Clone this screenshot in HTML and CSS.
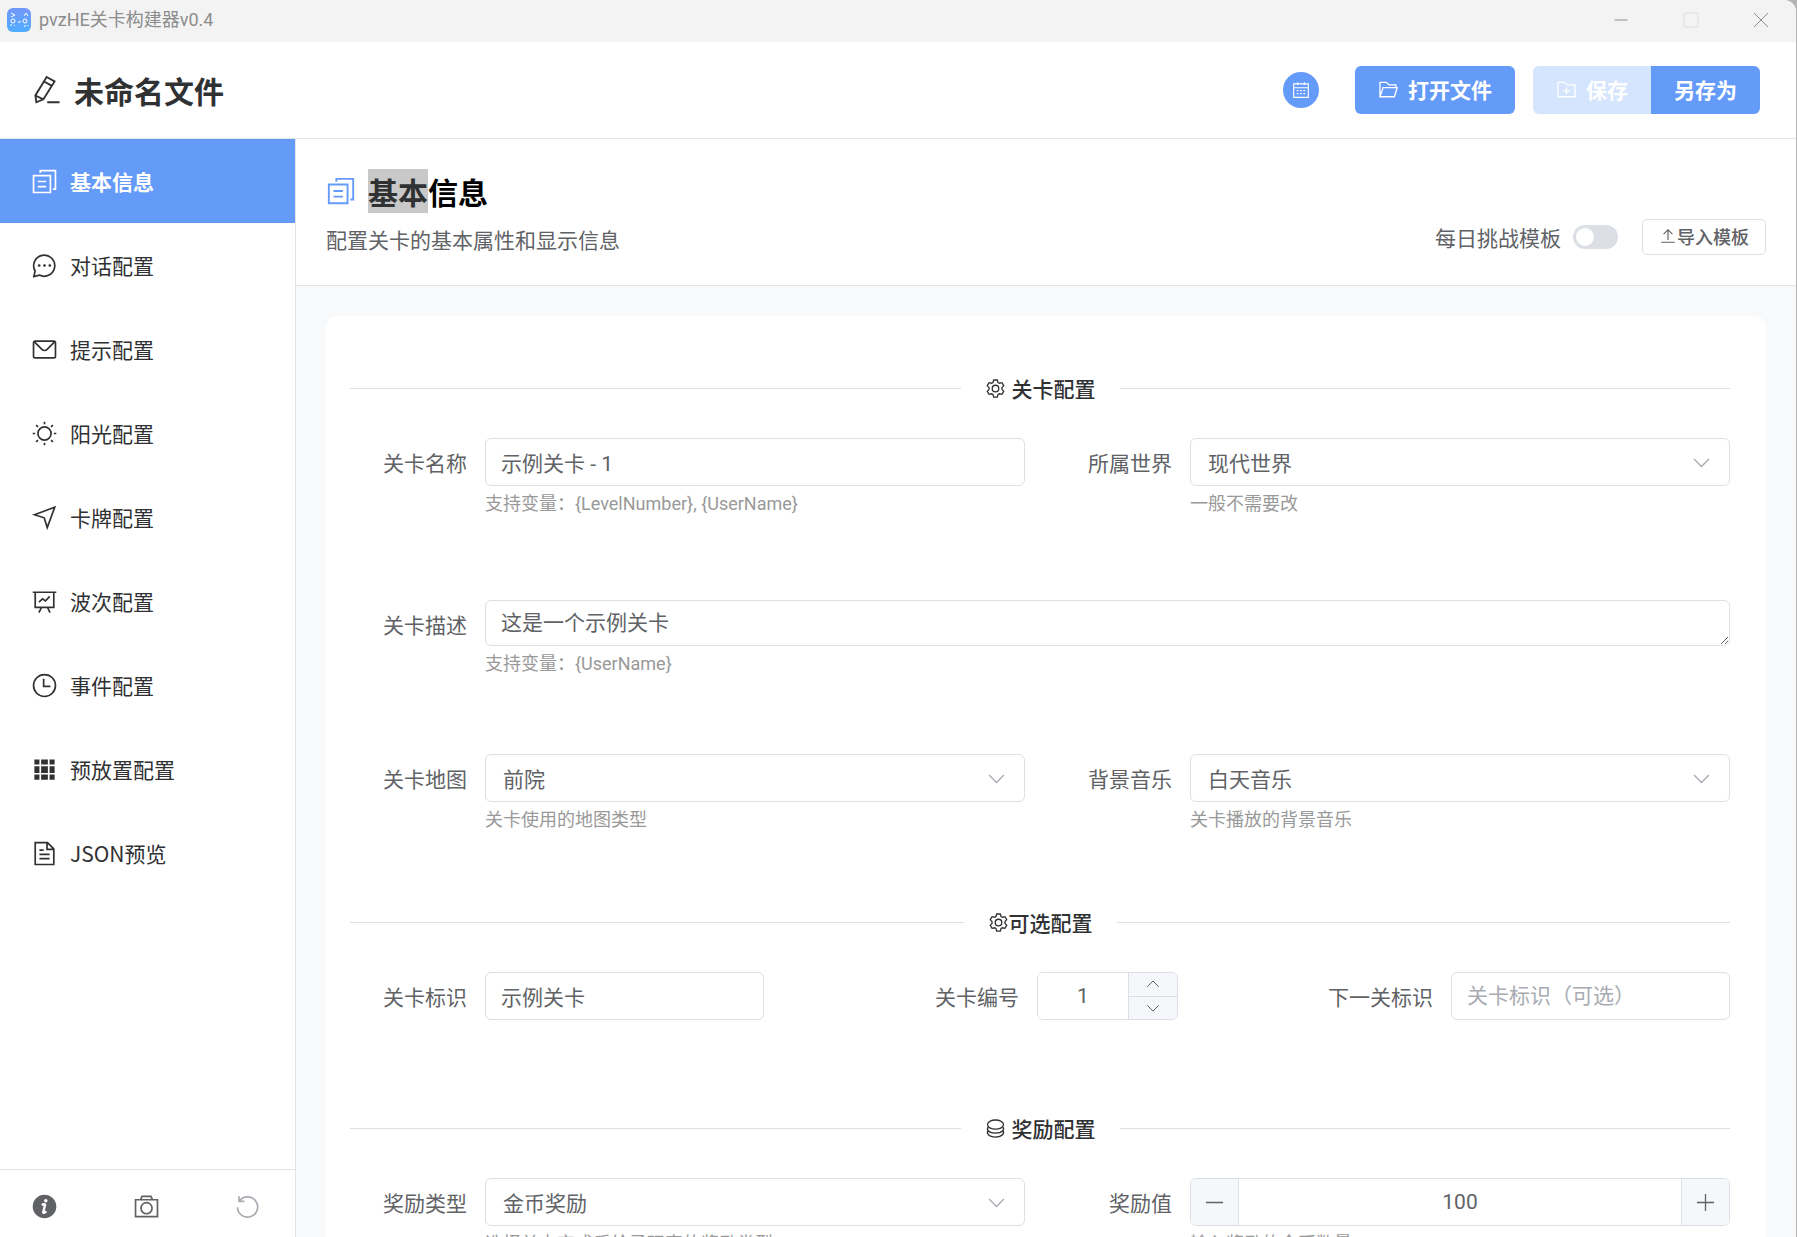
FILE: index.html
```html
<!DOCTYPE html>
<html lang="zh-CN">
<head>
    <meta charset="UTF-8">
    <meta name="viewport" content="width=device-width, initial-scale=1.0">
    <title>pvzHE关卡构建器v0.4</title>
    <link rel="stylesheet" href="styles.css">
</head>
<body>

<!-- Icon sprite -->
<svg class="sprite" aria-hidden="true">
    <symbol id="i-copy" viewBox="0 0 1024 1024"><path d="M96 288h640v640H96zM352 192V96h576v704h-96M256 512h320M256 704h320"/></symbol>
    <symbol id="i-pen" viewBox="0 0 1024 1024"><path d="M500 70 770 220 390 830 150 930 115 700zM410 220 680 370M115 700 390 830M520 930h420"/></symbol>
    <symbol id="i-chat" viewBox="0 0 1024 1024"><path d="M110 930l46-210A400 400 0 1 1 320 875z"/><g class="solid"><circle cx="310" cy="512" r="52"/><circle cx="512" cy="512" r="52"/><circle cx="714" cy="512" r="52"/></g></symbol>
    <symbol id="i-message" viewBox="0 0 1024 1024"><rect x="96" y="192" width="832" height="640" rx="64"/><path d="M110 205l304 304a140 140 0 0 0 196 0l304-304"/></symbol>
    <symbol id="i-sun" viewBox="0 0 1024 1024"><circle cx="512" cy="512" r="250"/><path d="M512 64v96M512 864v96M64 512h96M864 512h96M195 195l68 68M761 761l68 68M195 829l68-68M761 263l68-68"/></symbol>
    <symbol id="i-position" viewBox="0 0 1024 1024"><path d="M130 408 900 124 616 894 500 524z"/></symbol>
    <symbol id="i-board" viewBox="0 0 1024 1024"><path d="M64 160h896M160 160v576h704V160M400 736 300 930M624 736l100 194M300 540l140-130 110 80 160-170"/></symbol>
    <symbol id="i-clock" viewBox="0 0 1024 1024"><circle cx="512" cy="512" r="416"/><path d="M480 256v288h256"/></symbol>
    <symbol id="i-grid" viewBox="0 0 1024 1024"><path class="solid" d="M128 128h192v192H128zM384 128h256v192H384zM704 128h192v192H704zM128 384h192v256H128zM384 384h256v256H384zM704 384h192v256H704zM128 704h192v192H128zM384 704h256v192H384zM704 704h192v192H704z"/></symbol>
    <symbol id="i-document" viewBox="0 0 1024 1024"><path d="M160 96h464l240 240v592H160zM608 110v242h242M320 384h160M320 544h384M320 704h384"/></symbol>
    <symbol id="i-info" viewBox="0 0 1024 1024"><circle class="solid" cx="512" cy="512" r="448"/><circle class="cut" cx="562" cy="292" r="66"/><path class="cut-line" d="M410 460c60-40 130-50 125 0l-70 250c-15 70 60 40 120-10"/></symbol>
    <symbol id="i-camera" viewBox="0 0 1024 1024"><path d="M96 256h832v640H96zM290 250l50-122h344l50 122"/><circle cx="512" cy="576" r="210"/></symbol>
    <symbol id="i-refresh" viewBox="0 0 1024 1024"><path d="M190 120v200h200M200 310A384 384 0 1 1 130 540"/></symbol>
    <symbol id="i-calendar" viewBox="0 0 1024 1024"><path d="M96 160h832v768H96zM96 384h832M320 64v160M704 64v160M270 544h100M460 544h100M650 544h100M270 720h100M460 720h100M650 720h100"/></symbol>
    <symbol id="i-folder-open" viewBox="0 0 1024 1024"><path d="M96 864V160h314l128 128h330v120M96 864l150-448h690L800 864z"/></symbol>
    <symbol id="i-folder-add" viewBox="0 0 1024 1024"><path d="M96 160h320l128 128h384v576H96zM512 416v320M352 576h320"/></symbol>
    <symbol id="i-upload" viewBox="0 0 1024 1024"><path d="M128 864h768M512 740V170M260 410l252-252 252 252"/></symbol>
    <symbol id="i-setting" viewBox="0 0 1024 1024"><path d="M424 96h176l36 122 66 38 124-30 88 152-88 92v84l88 92-88 152-124-30-66 38-36 122H424l-36-122-66-38-124 30-88-152 88-92v-84l-88-92 88-152 124 30 66-38z"/><circle cx="512" cy="512" r="160"/></symbol>
    <symbol id="i-coin" viewBox="0 0 1024 1024"><ellipse cx="512" cy="320" rx="390" ry="224"/><path d="M150 440c-90 130 20 296 362 296s452-166 362-296M150 610c-90 130 20 318 362 318s452-188 362-318"/></symbol>
    <symbol id="i-down" viewBox="0 0 1024 1024"><path d="M150 340l362 370 362-370"/></symbol>
    <symbol id="i-up" viewBox="0 0 1024 1024"><path d="M150 690l362-370 362 370"/></symbol>
    <symbol id="i-minus" viewBox="0 0 1024 1024"><path d="M96 512h832"/></symbol>
    <symbol id="i-plus" viewBox="0 0 1024 1024"><path d="M96 512h832M512 96v832"/></symbol>
    <symbol id="i-close" viewBox="0 0 1024 1024"><path d="M64 64l896 896M960 64 64 960"/></symbol>
    <symbol id="i-square" viewBox="0 0 1024 1024"><rect x="64" y="64" width="896" height="896" rx="60"/></symbol>
</svg>

<div class="window">
    <div class="titlebar">
        <svg class="app-logo" viewBox="0 0 24 24">
            <defs>
                <linearGradient id="logoFill" x1="0" y1="0" x2="0" y2="1">
                    <stop offset="0" stop-color="#7397fb"/>
                    <stop offset="1" stop-color="#4fadff"/>
                </linearGradient>
            </defs>
            <rect width="24" height="24" rx="6" fill="url(#logoFill)"/>
            <path d="M4 5l4 2-4 2M19 5l-2 3M19 5l2 3M11 14h3M4 18v-2M8 18l-1-1M17 18h2M21 18v-1" fill="none" stroke="#fff"/>
            <circle cx="6" cy="13" r="2" fill="none" stroke="#fff"/>
            <circle cx="18" cy="13" r="2" fill="none" stroke="#fff"/>
        </svg>
        <span class="app-name">pvzHE关卡构建器v0.4</span>
        <div class="window-controls">
            <button type="button" aria-label="最小化"><svg class="icon"><use href="#i-minus"/></svg></button>
            <button type="button" aria-label="最大化" disabled><svg class="icon"><use href="#i-square"/></svg></button>
            <button type="button" aria-label="关闭"><svg class="icon"><use href="#i-close"/></svg></button>
        </div>
    </div>

    <header class="header">
        <svg class="icon icon-lg"><use href="#i-pen"/></svg>
        <h1>未命名文件</h1>
        <div class="header-actions">
            <button type="button" class="btn-round" aria-label="日历"><svg class="icon"><use href="#i-calendar"/></svg></button>
            <button type="button" class="btn"><svg class="icon"><use href="#i-folder-open"/></svg>打开文件</button>
            <div class="btn-group">
                <button type="button" class="btn" disabled><svg class="icon"><use href="#i-folder-add"/></svg>保存</button>
                <button type="button" class="btn">另存为</button>
            </div>
        </div>
    </header>

    <div class="body">
        <aside class="sidebar">
            <nav class="menu">
                <a href="#basic" class="active"><svg class="icon"><use href="#i-copy"/></svg>基本信息</a>
                <a href="#dialog"><svg class="icon"><use href="#i-chat"/></svg>对话配置</a>
                <a href="#tips"><svg class="icon"><use href="#i-message"/></svg>提示配置</a>
                <a href="#sun"><svg class="icon"><use href="#i-sun"/></svg>阳光配置</a>
                <a href="#cards"><svg class="icon"><use href="#i-position"/></svg>卡牌配置</a>
                <a href="#waves"><svg class="icon"><use href="#i-board"/></svg>波次配置</a>
                <a href="#events"><svg class="icon"><use href="#i-clock"/></svg>事件配置</a>
                <a href="#preset"><svg class="icon"><use href="#i-grid"/></svg>预放置配置</a>
                <a href="#json"><svg class="icon"><use href="#i-document"/></svg>JSON预览</a>
            </nav>
            <div class="sidebar-footer">
                <button type="button" aria-label="关于"><svg class="icon"><use href="#i-info"/></svg></button>
                <button type="button" aria-label="截图"><svg class="icon"><use href="#i-camera"/></svg></button>
                <button type="button" aria-label="撤销" disabled><svg class="icon"><use href="#i-refresh"/></svg></button>
            </div>
        </aside>

        <main class="main">
            <div class="page-header">
                <div>
                    <h2><svg class="icon icon-lg"><use href="#i-copy"/></svg><span><span class="selected">基本</span>信息</span></h2>
                    <p>配置关卡的基本属性和显示信息</p>
                </div>
                <div class="page-actions">
                    <label for="daily">每日挑战模板</label>
                    <input type="checkbox" id="daily" class="switch" role="switch">
                    <button type="button" class="btn-plain"><svg class="icon"><use href="#i-upload"/></svg>导入模板</button>
                </div>
            </div>

            <div class="content">
                <form class="card">
                    <div class="divider spaced"><svg class="icon"><use href="#i-setting"/></svg>关卡配置</div>
                    <div class="row row-name">
                        <div class="field">
                            <label for="levelName">关卡名称</label>
                            <div class="control">
                                <input type="text" id="levelName" value="示例关卡 - 1">
                                <p class="hint">支持变量：{LevelNumber}, {UserName}</p>
                            </div>
                        </div>
                        <div class="field">
                            <label for="world">所属世界</label>
                            <div class="control">
                                <div class="select">
                                    <select id="world"><option>现代世界</option></select>
                                    <svg class="icon"><use href="#i-down"/></svg>
                                </div>
                                <p class="hint">一般不需要改</p>
                            </div>
                        </div>
                    </div>

                    <div class="row row-desc">
                        <div class="field">
                            <label for="levelDesc">关卡描述</label>
                            <div class="control">
                                <textarea id="levelDesc" rows="1">这是一个示例关卡</textarea>
                                <p class="hint">支持变量：{UserName}</p>
                            </div>
                        </div>
                    </div>

                    <div class="row row-map">
                        <div class="field">
                            <label for="map">关卡地图</label>
                            <div class="control">
                                <div class="select">
                                    <select id="map"><option>前院</option></select>
                                    <svg class="icon"><use href="#i-down"/></svg>
                                </div>
                                <p class="hint">关卡使用的地图类型</p>
                            </div>
                        </div>
                        <div class="field">
                            <label for="music">背景音乐</label>
                            <div class="control">
                                <div class="select">
                                    <select id="music"><option>白天音乐</option></select>
                                    <svg class="icon"><use href="#i-down"/></svg>
                                </div>
                                <p class="hint">关卡播放的背景音乐</p>
                            </div>
                        </div>
                    </div>

                    <div class="divider"><svg class="icon"><use href="#i-setting"/></svg>可选配置</div>
                    <div class="row row-optional">
                        <div class="field">
                            <label for="levelId">关卡标识</label>
                            <div class="control"><input type="text" id="levelId" value="示例关卡"></div>
                        </div>
                        <div class="field field-small">
                            <label for="levelNo">关卡编号</label>
                            <div class="control">
                                <div class="number">
                                    <input type="text" inputmode="numeric" id="levelNo" value="1">
                                    <div class="number-side">
                                        <button type="button" aria-label="增加"><svg class="icon"><use href="#i-up"/></svg></button>
                                        <button type="button" aria-label="减少"><svg class="icon"><use href="#i-down"/></svg></button>
                                    </div>
                                </div>
                            </div>
                        </div>
                        <div class="field">
                            <label for="nextId">下一关标识</label>
                            <div class="control"><input type="text" id="nextId" placeholder="关卡标识（可选）"></div>
                        </div>
                    </div>

                    <div class="divider spaced"><svg class="icon"><use href="#i-coin"/></svg>奖励配置</div>
                    <div class="row">
                        <div class="field">
                            <label for="rewardType">奖励类型</label>
                            <div class="control">
                                <div class="select">
                                    <select id="rewardType"><option>金币奖励</option></select>
                                    <svg class="icon"><use href="#i-down"/></svg>
                                </div>
                                <p class="hint">选择关卡完成后给予玩家的奖励类型</p>
                            </div>
                        </div>
                        <div class="field">
                            <label for="rewardValue">奖励值</label>
                            <div class="control">
                                <div class="number">
                                    <button type="button" aria-label="减少"><svg class="icon"><use href="#i-minus"/></svg></button>
                                    <input type="text" inputmode="numeric" id="rewardValue" value="100">
                                    <button type="button" aria-label="增加"><svg class="icon"><use href="#i-plus"/></svg></button>
                                </div>
                                <p class="hint">输入奖励的金币数量</p>
                            </div>
                        </div>
                    </div>
                </form>
            </div>
        </main>
    </div>
</div>

</body>
</html>
```
FILE: styles.css
```css
* {
    box-sizing: border-box;
}
body {
    margin: 0;
    background-color: #b5b5b5;
    font-family: "Noto Sans CJK SC", "Noto Sans", sans-serif;
    font-size: 21px;
    line-height: 30px;
    color: #303133;
}
h1, h2, p {
    margin: 0;
}
button, input, select, textarea {
    font: inherit;
    color: inherit;
}
button {
    display: flex;
    align-items: center;
    justify-content: center;
    padding: 0;
    border: none;
    background: none;
    cursor: pointer;
}

/* Icons */
.sprite {
    display: none;
}
.icon {
    width: 21px;
    height: 21px;
    flex: none;
    fill: none;
    stroke: currentColor;
    stroke-width: 64px;
}
.icon-lg {
    width: 30px;
    height: 30px;
}
.solid {
    fill: currentColor;
    stroke: none;
}
.cut {
    fill: #fff;
    stroke: none;
}
.cut-line {
    stroke: #fff;
    stroke-width: 90px;
}

/* Window */
.window {
    display: flex;
    flex-direction: column;
    height: 100vh;
    margin-right: 1px;
    border-radius: 0 12px 0 0;
    background-color: #fff;
    overflow: hidden;
}
.titlebar {
    display: flex;
    align-items: center;
    height: 42px;
    flex: none;
    padding: 0 0 3px 7px;
    background-color: #f3f3f3;
    color: #8c8c8c;
    font-size: 18px;
}
.app-logo {
    width: 24px;
    height: 24px;
    margin-right: 8px;
}
.app-name {
    font-family: Roboto, "Noto Sans CJK SC", sans-serif;
}
.window-controls {
    display: flex;
    margin-left: auto;
}
.window-controls button {
    width: 70px;
}
.window-controls .icon {
    width: 16px;
    height: 16px;
}
.window-controls button:disabled {
    color: #dcdcdc;
}

/* Header */
.header {
    display: flex;
    align-items: center;
    gap: 12px;
    height: 97px;
    flex: none;
    padding: 0 36px 0 32px;
    border-bottom: 1px solid #e4e4e6;
}
.header h1 {
    font-size: 30px;
}
.header-actions {
    display: flex;
    align-items: center;
    gap: 18px;
    margin-left: auto;
}
.btn-round {
    width: 36px;
    height: 36px;
    margin-right: 18px;
    border-radius: 50%;
    background-color: #659bf8;
    color: #fff;
}
.btn-round .icon {
    width: 18px;
    height: 18px;
}
.btn {
    gap: 9px;
    height: 48px;
    padding: 0 23px 2px;
    border-radius: 6px;
    background-color: #659bf8;
    color: #fff;
    font-weight: bold;
}
.btn:disabled {
    background-color: #d5e5fd;
}
.btn-group {
    display: flex;
}
.btn-group .btn:first-child {
    border-radius: 6px 0 0 6px;
}
.btn-group .btn:last-child {
    border-radius: 0 6px 6px 0;
}

/* Sidebar */
.body {
    display: flex;
    flex: 1;
    min-height: 0;
}
.sidebar {
    display: flex;
    flex-direction: column;
    width: 296px;
    flex: none;
    border-right: 1px solid #e4e4e6;
}
.menu {
    flex: 1;
}
.menu a {
    display: flex;
    align-items: center;
    gap: 12px;
    height: 84px;
    padding: 0 31px;
    color: #303133;
    text-decoration: none;
}
.menu .active {
    background-color: #659bf8;
    color: #fff;
    font-weight: bold;
}
.menu .icon, .sidebar-footer .icon {
    width: 27px;
    height: 27px;
}
.sidebar-footer {
    display: flex;
    align-items: center;
    justify-content: space-between;
    height: 68px;
    padding: 5px 34px 0 31px;
    border-top: 1px solid #e4e4e6;
    color: #606266;
}
.sidebar-footer button:disabled {
    color: #a8abb2;
}

/* Page header */
.main {
    display: flex;
    flex-direction: column;
    flex: 1;
    min-width: 0;
}
.page-header {
    display: flex;
    justify-content: space-between;
    height: 147px;
    flex: none;
    padding: 30px;
    border-bottom: 1px solid #e4e4e6;
}
.page-header h2 {
    display: flex;
    align-items: center;
    gap: 12px;
    font-size: 30px;
    line-height: 44px;
    color: #000;
}
.page-header h2 .icon {
    color: #659bf8;
}
.selected {
    display: inline-block;
    background-color: #c8c8c8;
    color: #303133;
}
.page-header p {
    margin-top: 11px;
    color: #606266;
}
.page-actions {
    display: flex;
    align-items: center;
    align-self: flex-end;
    color: #606266;
}
.switch {
    appearance: none;
    width: 45px;
    height: 24px;
    margin: 0 24px 0 12px;
    padding: 3px;
    border-radius: 12px;
    background-color: #dcdfe6;
    cursor: pointer;
}
.switch::before {
    content: "";
    display: block;
    width: 18px;
    height: 18px;
    border-radius: 50%;
    background-color: #fff;
}
.switch:checked {
    background-color: #659bf8;
}
.switch:checked::before {
    margin-left: auto;
}
.btn-plain {
    height: 36px;
    padding: 0 16px 2px;
    border: 1px solid #dcdfe6;
    border-radius: 5px;
    font-size: 18px;
    font-weight: 500;
}
.btn-plain .icon {
    width: 18px;
    height: 18px;
}

/* Form */
.content {
    flex: 1;
    padding: 30px;
    background-color: #f7f9fb;
    overflow: hidden;
}
.card {
    padding: 57px 36px 24px 24px;
    border-radius: 12px;
    background-color: #fff;
}
.divider {
    display: flex;
    align-items: center;
    margin-bottom: 35px;
    font-weight: 500;
}
.divider::before, .divider::after {
    content: "";
    flex: 1;
    height: 1px;
    background-color: #dcdfe6;
}
.divider::before {
    margin-right: 24px;
}
.divider::after {
    margin-left: 24px;
}
.divider.spaced .icon {
    margin-right: 6px;
}
.row {
    display: flex;
    justify-content: space-between;
    gap: 30px;
}
.row-name {
    margin-bottom: 84px;
}
.row-desc {
    margin-bottom: 78px;
}
.row-map {
    margin-bottom: 75px;
}
.row-optional {
    margin-bottom: 93px;
}
.field {
    display: flex;
    flex: 1;
    min-width: 0;
}
.row-optional .field {
    flex: 0 0 30%;
}
.row-optional .field-small {
    flex-basis: 20%;
}
.field label {
    width: 135px;
    flex: none;
    padding-right: 18px;
    line-height: 48px;
    text-align: right;
    color: #606266;
}
.control {
    flex: 1;
    min-width: 0;
    color: #606266;
}
.control input, .control select, .control textarea {
    display: block;
    width: 100%;
    height: 48px;
    padding: 0 15px;
    border: 1px solid #dcdfe6;
    border-radius: 6px;
    background-color: #fff;
    outline: none;
}
.control input, .control textarea {
    font-family: Roboto, "Noto Sans CJK SC", sans-serif;
}
.control textarea {
    height: 46px;
    min-height: 46px;
    padding: 7px 15px;
    resize: vertical;
}
.control input::placeholder {
    color: #a8abb2;
}
.select {
    position: relative;
}
.control select {
    appearance: none;
    padding: 0 48px 0 17px;
}
.select .icon {
    position: absolute;
    top: 14px;
    right: 18px;
    color: #a8abb2;
    pointer-events: none;
}
.hint {
    margin-top: 6px;
    font-family: Roboto, "Noto Sans CJK SC", sans-serif;
    font-size: 18px;
    line-height: 24px;
    color: #999;
}
.number {
    display: flex;
    height: 48px;
    border: 1px solid #dcdfe6;
    border-radius: 6px;
    overflow: hidden;
}
.number input {
    flex: 1;
    min-width: 0;
    height: 46px;
    border: none;
    border-radius: 0;
    text-align: center;
}
.number button {
    width: 48px;
    background-color: #f5f7fa;
}
.number > button:first-child {
    border-right: 1px solid #dcdfe6;
}
.number > button:last-child {
    border-left: 1px solid #dcdfe6;
}
.number-side {
    display: flex;
    flex-direction: column;
    border-left: 1px solid #dcdfe6;
}
.number-side button {
    flex: 1;
}
.number-side button:first-child {
    border-bottom: 1px solid #dcdfe6;
}
.number-side .icon {
    width: 16px;
    height: 16px;
}
```
